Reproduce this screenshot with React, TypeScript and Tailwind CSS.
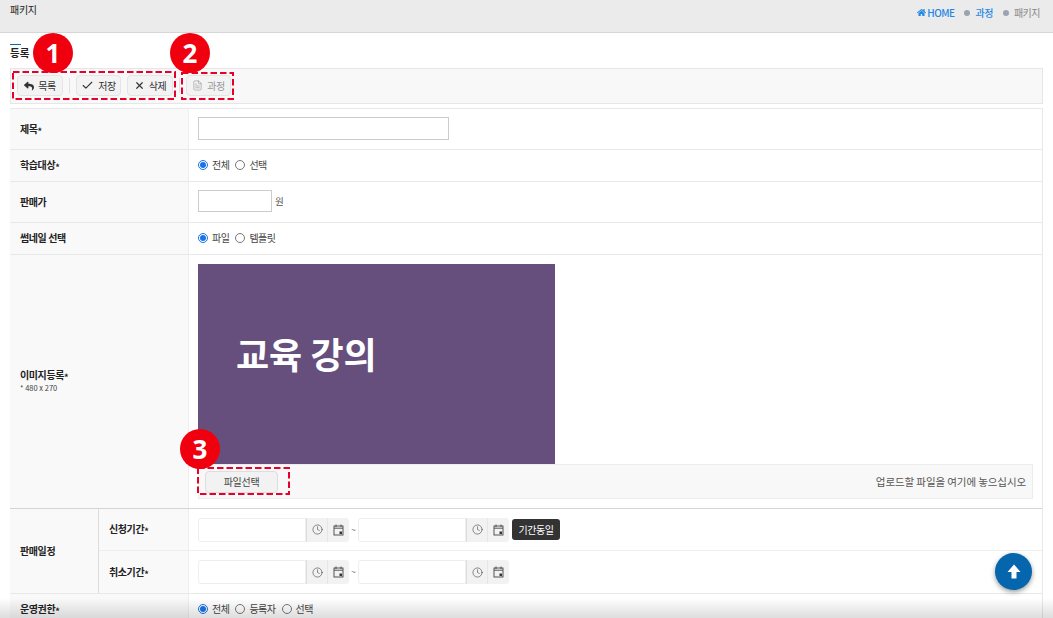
import { Check, Clock, FileText, X } from "lucide-react";
import { FaHome, FaReply } from "react-icons/fa";
import type { ReactNode } from "react";

const font = "font-['Noto_Sans_CJK_KR','Noto_Sans',sans-serif]";

function Badge({ n, className }: { n: string; className: string }) {
    return (
        <div className={`absolute z-20 w-10 h-10 rounded-full bg-[#f0000f] text-white text-[26px] font-bold leading-10 text-center font-['Noto_Sans',sans-serif] ${className}`}>
            {n}
        </div>
    );
}

// the red marker boxes are drawn so the dash length can match
function Dashed({ w, h, className }: { w: number; h: number; className: string }) {
    return (
        <svg width={w} height={h} className={`absolute z-10 ${className}`} fill="none">
            <rect x="1" y="1" width={w - 2} height={h - 2} stroke="#e8002a" strokeWidth="2" strokeDasharray="6.5 3" />
        </svg>
    );
}

function ToolButton({ icon, label, muted, width }: { icon: ReactNode; label: string; muted?: boolean; width: string }) {
    return (
        <button className={`h-[21px] flex items-center justify-center gap-1 bg-[#f3f3f3] border border-[#e4e4e4] rounded-sm text-[10px] tracking-[-0.5px] ${width} ${muted ? "text-[#999]" : "text-[#333]"}`}>
            {icon}
            {label}
        </button>
    );
}

function Radio({ label, checked }: { label: string; checked?: boolean }) {
    return (
        <span className="flex items-center gap-1 text-[10px] tracking-[-0.5px] text-[#444]">
            <span className={`w-[10px] h-[10px] rounded-full border flex items-center justify-center bg-white ${checked ? "border-[#1a73e8]" : "border-[#777]"}`}>
                {checked && <span className="w-[6px] h-[6px] rounded-full bg-[#1a73e8]" />}
            </span>
            {label}
        </span>
    );
}

function Req() {
    return <span className="inline-block text-[9px] leading-none translate-y-[2px]">*</span>;
}

function Row({ label, height, children }: { label: ReactNode; height: string; children: ReactNode }) {
    return (
        <div className={`flex border-b border-[#e8e8e8] ${height}`}>
            <div className="w-[179px] shrink-0 bg-[#f9f9f9] border-r border-[#eeeeee] pl-[10px] pb-[2px] flex items-center text-[10px] font-bold tracking-[-0.4px] text-[#222]">
                <span>{label}</span>
            </div>
            <div className="flex-1 pl-[9px] pb-[2px] flex items-center">{children}</div>
        </div>
    );
}

function DateBox() {
    return (
        <div className="flex h-[24px]">
            <div className="w-[108px] bg-white border border-[#eeeeee] rounded-l-[3px]" />
            <div className="w-[21px] bg-[#f2f2f2] border-l border-[#dddddd] flex items-center justify-center">
                <Clock size={11} strokeWidth={1.2} className="text-[#333]" />
            </div>
            <div className="w-[22px] bg-[#f2f2f2] border-l border-[#e6e6e6] rounded-r-[3px] flex items-center justify-center">
                <svg width="11" height="12" viewBox="0 0 11 12" fill="none" stroke="#444" strokeWidth="0.9">
                    <rect x="1" y="2" width="9" height="9" />
                    <path d="M1 4.2h9M3 0.5v2.5M8 0.5v2.5" />
                    <rect x="6.5" y="7.5" width="2.5" height="2.5" fill="#333" stroke="none" />
                </svg>
            </div>
        </div>
    );
}

function DateRange({ children }: { children?: ReactNode }) {
    return (
        <div className="flex items-center">
            <DateBox />
            <span className="w-[9px] text-center text-[8px] text-[#555]">~</span>
            <DateBox />
            {children}
        </div>
    );
}

function App() {
    return (
        <div className={`relative w-[1053px] h-[618px] overflow-hidden bg-white ${font}`}>
            <header className="h-[33px] bg-[#ebebeb] border-b border-[#d6d6d6] flex justify-between pl-[10px] pr-[13px]">
                <span className="text-[10px] tracking-[-0.3px] text-[#222] leading-[19px]">패키지</span>
                <nav className="flex items-center h-[25px] text-[10px] tracking-[-0.5px]">
                    <FaHome size={9} className="text-[#1e88e5] mr-[1px]" />
                    <span className="text-[#1e88e5] font-medium">HOME</span>
                    <span className="w-[6px] h-[6px] rounded-full bg-[#9aa3b0] ml-[10px] mr-[5px]" />
                    <span className="text-[#1e88e5] font-medium">과정</span>
                    <span className="w-[6px] h-[6px] rounded-full bg-[#9aa3b0] ml-[10px] mr-[5px]" />
                    <span className="text-[#888]">패키지</span>
                </nav>
            </header>

            <main className="px-[10px]">
                <div className="h-[35px] pt-[11px]">
                    <div className="w-[11px] h-px bg-[#0b6cb5]" />
                    <h2 className="text-[10.5px] font-bold text-[#222] leading-[14px] mt-px">등록</h2>
                </div>

                <div className="h-[36px] bg-[#f8f8f8] border border-[#e6e6e6] flex items-center pl-[6px] pb-[1px]">
                    <ToolButton width="w-[46px]" icon={<FaReply size={10} />} label="목록" />
                    <div className="w-px h-[15px] bg-[#e2e2e2] mx-[6px]" />
                    <ToolButton width="w-[45px]" icon={<Check size={13} strokeWidth={2} />} label="저장" />
                    <div className="w-[6px]" />
                    <ToolButton width="w-[46px]" icon={<X size={11} strokeWidth={2.6} />} label="삭제" />
                    <div className="w-px h-[15px] bg-[#e2e2e2] mx-[6px]" />
                    <ToolButton width="w-[45px]" muted icon={<FileText size={11} strokeWidth={1.4} />} label="과정" />
                </div>

                <div className="mt-[4px] border-t border-[#e8e8e8] border-r">
                    <Row label={<>제목<Req /></>} height="h-[41px]">
                        <div className="w-[251px] h-[23px] border border-[#cccccc] bg-white" />
                    </Row>
                    <Row label={<>학습대상<Req /></>} height="h-[32px]">
                        <div className="flex gap-[6px]">
                            <Radio label="전체" checked />
                            <Radio label="선택" />
                        </div>
                    </Row>
                    <Row label="판매가" height="h-[41px]">
                        <div className="w-[74px] h-[22px] border border-[#cccccc] bg-white" />
                        <span className="ml-[3px] text-[9.5px] text-[#555]">원</span>
                    </Row>
                    <Row label="썸네일 선택" height="h-[32px]">
                        <div className="flex gap-[6px]">
                            <Radio label="파일" checked />
                            <Radio label="템플릿" />
                        </div>
                    </Row>
                    <div className="flex h-[254px] border-b border-[#d4d4d4]">
                        <div className="w-[179px] shrink-0 bg-[#f9f9f9] border-r border-[#eeeeee] pl-[10px] pb-[2px] flex flex-col justify-center">
                            <div className="text-[10px] font-bold tracking-[-0.4px] text-[#222] leading-[14px]">이미지등록<Req /></div>
                            <div className="text-[7.5px] text-[#444] leading-[12px]">* 480 x 270</div>
                        </div>
                        <div className="flex-1 pl-[9px] pr-[9px] pt-[9px]">
                            <div className="w-[357px] h-[200px] bg-[#674f7d] pl-[38px] pt-[62px] text-white text-[36px] font-bold leading-[54px]">
                                교육 강의
                            </div>
                            <div className="h-[35px] bg-[#f8f8f8] border border-[#ececec] flex items-center justify-between pl-[6px] pr-[6px]">
                                <button className="w-[73px] h-[22px] bg-[#f2f2f2] border border-[#dddddd] rounded-sm text-[10px] tracking-[-0.3px] text-[#444]">파일선택</button>
                                <span className="text-[10.5px] tracking-[-0.1px] text-[#555]">업로드할 파일을 여기에 놓으십시오</span>
                            </div>
                        </div>
                    </div>
                    <div className="flex h-[85px] border-b border-[#e8e8e8]">
                        <div className="w-[89px] shrink-0 bg-[#f9f9f9] border-r border-[#dddddd] pl-[10px] pb-[2px] flex items-center text-[10px] font-bold tracking-[-0.4px] text-[#222]">판매일정</div>
                        <div className="flex-1 flex flex-col">
                            <div className="flex h-[42px] border-b border-[#eeeeee]">
                                <div className="w-[90px] bg-[#f9f9f9] border-r border-[#eeeeee] pl-[10px] pb-[2px] flex items-center text-[10px] font-bold tracking-[-0.4px] text-[#222]"><span>신청기간<Req /></span></div>
                                <div className="flex-1 pl-[9px] flex items-center">
                                    <DateRange>
                                        <button className="ml-[3px] w-[48px] h-[21px] bg-[#333333] text-white text-[10px] tracking-[-0.4px] rounded-[3px]">기간동일</button>
                                    </DateRange>
                                </div>
                            </div>
                            <div className="flex h-[42px]">
                                <div className="w-[90px] bg-[#f9f9f9] border-r border-[#eeeeee] pl-[10px] pb-[2px] flex items-center text-[10px] font-bold tracking-[-0.4px] text-[#222]"><span>취소기간<Req /></span></div>
                                <div className="flex-1 pl-[9px] flex items-center">
                                    <DateRange />
                                </div>
                            </div>
                        </div>
                    </div>
                    <Row label={<>운영권한<Req /></>} height="h-[32px]">
                        <div className="flex gap-[6px]">
                            <Radio label="전체" checked />
                            <Radio label="등록자" />
                            <Radio label="선택" />
                        </div>
                    </Row>
                </div>
            </main>

            {/* annotations over the page */}
            <Badge n="1" className="left-[33px] top-[33px]" />
            <Badge n="2" className="left-[170px] top-[33px]" />
            <Badge n="3" className="left-[180px] top-[429px]" />
            <Dashed w={164} h={29} className="left-[12px] top-[71px]" />
            <Dashed w={53} h={28} className="left-[181px] top-[72px]" />
            <Dashed w={93} h={28} className="left-[197px] top-[467px]" />

            <button className="absolute z-20 left-[995px] top-[553px] w-[37px] h-[37px] rounded-full bg-[#0565ad] shadow-[0_2px_5px_rgba(0,0,0,0.4)] flex items-center justify-center">
                <svg width="14" height="15" viewBox="0 0 14 15" fill="#fff">
                    <path d="M7 0.5 13.5 8H9.5V14.5H4.5V8H0.5Z" />
                </svg>
            </button>
            <div className="absolute z-10 left-0 right-0 bottom-0 h-[20px] bg-gradient-to-b from-transparent to-[#00000022]" />
        </div>
    );
}

export default App;
